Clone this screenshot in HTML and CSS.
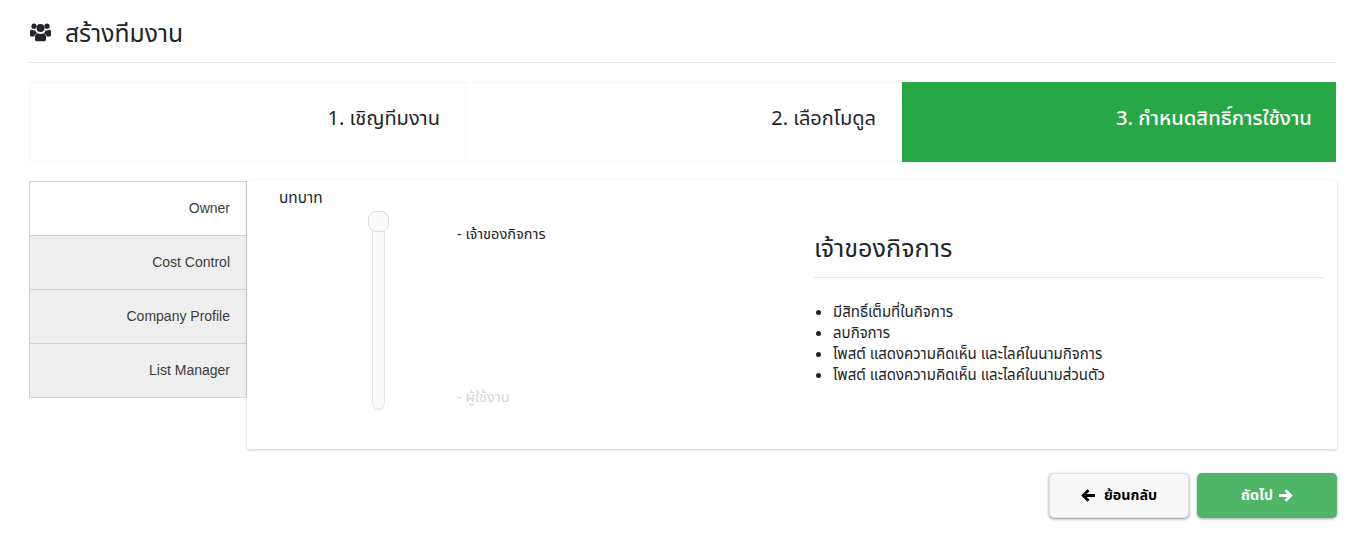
FILE: index.html
```html
<!DOCTYPE html>
<html lang="th">
<head>
<meta charset="utf-8">
<title>สร้างทีมงาน</title>
<link rel="stylesheet" href="styles.css">
</head>
<body>
<div class="page">
  <header class="page-head">
    <svg class="head-icon" viewBox="0 0 21 20" aria-hidden="true"><g fill="#212529"><circle cx="4" cy="4.2" r="2.6"/><circle cx="17" cy="4.2" r="2.6"/><circle cx="10.5" cy="6" r="4"/><path d="M0 9.5C0 8 1.2 7.6 2.2 8c.9.5 2 .6 3 .3.3 1 1 2 1.8 2.6-1.4.7-2.5 2-2.7 3.6H1.2C.5 14.500 0 14 0 13.300zM21 9.500C21 8 19.800 7.600 18.800 8c-.9.500-2 .600-3 .300-.3 1-1 2-1.800 2.600 1.400.700 2.500 2 2.700 3.600h3.100c.700 0 1.200-.500 1.200-1.200z"/><path d="M7.500 11.300c1.800 1 4.200 1 6 0 1.700.300 2.500 1.700 2.500 3.500v2.700c0 1-.8 1.800-1.800 1.800H6.800c-1 0-1.800-.8-1.800-1.800v-2.700c0-1.800.8-3.200 2.500-3.500z"/></g></svg>
    <h1 class="page-title">สร้างทีมงาน</h1>
  </header>

  <nav class="steps">
    <div class="step">1. เชิญทีมงาน</div>
    <div class="step">2. เลือกโมดูล</div>
    <div class="step step-active">3. กำหนดสิทธิ์การใช้งาน</div>
  </nav>

  <section class="workspace">
    <ul class="tabs">
      <li class="tab tab-active">Owner</li>
      <li class="tab">Cost Control</li>
      <li class="tab">Company Profile</li>
      <li class="tab">List Manager</li>
    </ul>
    <div class="panel">
      <div class="role-col">
        <div class="role-label">บทบาท</div>
        <div class="role-picker">
          <div class="slider"><span class="slider-handle"></span></div>
          <div class="levels">
            <span class="level">- เจ้าของกิจการ</span>
            <span class="level level-muted">- ผู้ใช้งาน</span>
          </div>
        </div>
      </div>
      <div class="role-detail">
        <h2 class="detail-title">เจ้าของกิจการ</h2>
        <ul class="detail-list">
          <li>มีสิทธิ์เต็มที่ในกิจการ</li>
          <li>ลบกิจการ</li>
          <li>โพสต์ แสดงความคิดเห็น และไลค์ในนามกิจการ</li>
          <li>โพสต์ แสดงความคิดเห็น และไลค์ในนามส่วนตัว</li>
        </ul>
      </div>
    </div>
  </section>

  <footer class="actions">
    <button class="btn btn-back" type="button">
      <svg class="btn-icon" viewBox="0 0 14 13" aria-hidden="true"><path d="M7.500 1.200 2.200 6.500l5.300 5.300M3 6.500h11" fill="none" stroke="currentColor" stroke-width="2.800"/></svg>
      <span>ย้อนกลับ</span>
    </button>
    <button class="btn btn-next" type="button">
      <span>ถัดไป</span>
      <svg class="btn-icon" viewBox="0 0 14 13" aria-hidden="true"><path d="M6.500 1.200l5.300 5.300-5.300 5.300M11 6.500H0" fill="none" stroke="currentColor" stroke-width="2.800"/></svg>
    </button>
  </footer>
</div>
</body>
</html>
```
FILE: styles.css
```css
* { box-sizing: border-box; }
html, body { margin: 0; padding: 0; background: #fff; }
body {
  color: #212529;
  font-family: "Noto Sans", "Noto Sans Thai", "Liberation Sans", sans-serif;
  overflow: hidden;
}
.page { padding: 0 29px 0 29px; width: 1366px; height: 535px; }
.page-head {
  display: flex;
  align-items: center;
  height: 63px;
  padding: 3px 0 0 1px;
  border-bottom: 1px solid #e6e6e6;
}
.head-icon { width: 21px; height: 20px; margin: -2px 14px 0 0; }
.page-title { margin: 0; font-size: 24.700px; font-weight: 400; line-height: 30px; color: #212529; }
.steps {
  display: grid;
  grid-template-columns: 436px 436px 434px;
  height: 80px;
  margin-top: 19px;
  margin-right: 1px;
  border: 1px solid #f8f8f8;
  border-right: 0;
}
.step {
  display: flex;
  align-items: center;
  justify-content: flex-end;
  padding: 0 25px 7px 0;
  font-size: 20px;
  color: #212529;
  border-right: 1px solid #f8f8f8;
}
.step-active { background: #28a745; color: #fff; border-right: 0; margin: -1px 0; padding: 0 24px 7px 0; font-size: 20.300px; font-weight: 500; }
.workspace { display: flex; align-items: flex-start; margin-top: 18px; }
.tabs { list-style: none; margin: 1px 0 0; padding: 0; width: 218px; border: 1px solid #d4d4d4; }
.tab {
  height: 54px;
  display: flex;
  align-items: center;
  justify-content: flex-end;
  padding: 0 16px 2px 0;
  background: #eeeeee;
  border-top: 1px solid #d4d4d4;
  font: 14px/1 "Liberation Sans", sans-serif;
  color: #3d3d3d;
}
.tab:first-child { border-top: 0; height: 53px; }
.tab-active { background: #fff; }
.panel {
  display: flex;
  width: 1090px;
  height: 269px;
  background: #fff;
  border-radius: 3px;
  box-shadow: 0 1px 3px rgba(0,0,0,.2);
  padding: 0 14px 0 32px;
}
.role-col { width: 536px; padding-top: 8px; }
.role-label { font-size: 15.400px; line-height: 19px; }
.role-picker { display: flex; margin-top: 3px; height: 200px; }
.slider {
  position: relative;
  width: 13px;
  height: 199px;
  margin-left: 93px;
  margin-top: 1px;
  background: #fafafa;
  border: 1px solid #e6e6e6;
  border-radius: 7px;
}
.slider-handle {
  position: absolute;
  top: -1px;
  left: -5px;
  width: 21px;
  height: 21px;
  background: #fafafa;
  border: 1px solid #dcdcdc;
  border-radius: 8px;
}
.levels {
  display: flex;
  flex-direction: column;
  justify-content: space-between;
  margin-left: 72px;
  padding-top: 14px;
  height: 196px;
  font-size: 14.600px;
  line-height: 19px;
}
.level-muted { color: #d5d5d5; }
.role-detail { flex: 1; padding-top: 51px; }
.detail-title {
  margin: 0 0 0 -1px;
  padding-bottom: 13px;
  border-bottom: 1px solid #e6e6e6;
  font-size: 25.200px;
  font-weight: 400;
  line-height: 33px;
}
.detail-list { margin: 23px 0 0; padding-left: 18px; font-size: 15px; line-height: 21px; }
.actions { display: flex; justify-content: flex-end; gap: 8px; margin-top: 24px; }
.btn {
  display: flex;
  align-items: center;
  justify-content: center;
  gap: 6px;
  width: 140px;
  height: 45px;
  padding: 0;
  border-radius: 5px;
  font-family: inherit;
  font-size: 14.300px;
  font-weight: 700;
}
.btn-back { gap: 9px; color: #000; background: #f8f8f8; border: 1px solid #e0e0e0; box-shadow: 0 1px 3px rgba(0,0,0,.45); }
.btn-next { color: #fff; background: #4fb569; border: 0; box-shadow: 0 1px 3px rgba(0,0,0,.35); }
.btn-icon { width: 14px; height: 13px; }
```
